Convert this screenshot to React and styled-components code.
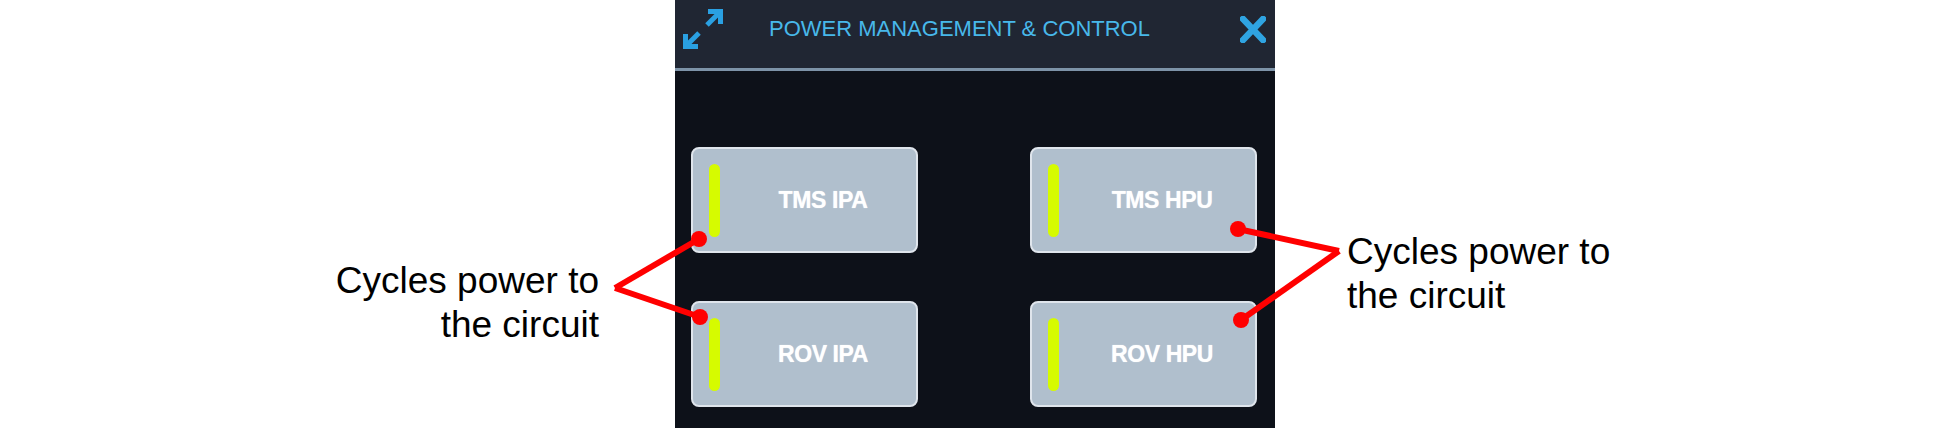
import styled, { createGlobalStyle } from "styled-components";

const GlobalStyle = createGlobalStyle`
  html, body {
    margin: 0;
    padding: 0;
    background: #fff;
    font-family: "Liberation Sans", Arial, sans-serif;
  }
`;

const Page = styled.div`
  position: relative;
  display: flex;
  width: 1950px;
  height: 428px;
  background: #fff;
  overflow: hidden;
`;

const Side = styled.div`
  width: ${(p) => p.$width};
  flex: ${(p) => (p.$grow ? 1 : "none")};
  display: flex;
  flex-direction: column;
  align-items: ${(p) => (p.$align === "right" ? "flex-end" : "flex-start")};
  padding: ${(p) => p.$pad};
  box-sizing: border-box;
`;

const Note = styled.div`
  font-family: "Liberation Sans", Arial, sans-serif;
  font-size: 37px;
  line-height: 44px;
  color: #000;
  text-align: ${(p) => p.$align};
`;

const Panel = styled.div`
  width: 600px;
  height: 428px;
  background: #0d1119;
  display: flex;
  flex-direction: column;
`;

const Header = styled.div`
  background: #202633;
  border-bottom: 3px solid #7d93a8;
  display: flex;
  align-items: center;
  padding: 0 9px 10px 7px;
  height: 58px;
`;

const Title = styled.div`
  flex: 1;
  margin-left: 45px;
  color: #48b8ea;
  font-size: 22px;
  white-space: nowrap;
`;

const Grid = styled.div`
  display: grid;
  grid-template-columns: 227px 227px;
  justify-content: space-between;
  row-gap: 48px;
  padding: 76px 18px 0 16px;
`;

const Button = styled.div`
  height: 106px;
  box-sizing: border-box;
  border: 2px solid #dfe5ec;
  border-radius: 8px;
  background: #b0bfcd;
  display: flex;
  align-items: center;
  padding-left: 16px;
`;

const Bar = styled.div`
  width: 11px;
  height: 73px;
  border-radius: 6px;
  background: ${(p) => (p.$on ? "#d6fb00" : "#6b7a88")};
`;

const Label = styled.div`
  flex: 1;
  text-align: center;
  padding-left: 10px;
  color: #fff;
  font-weight: bold;
  font-size: 23px;
  letter-spacing: -0.4px;
  text-shadow: 0 0 1px rgba(255, 255, 255, 0.8);
`;

const Leaders = styled.svg`
  position: absolute;
  left: 0;
  top: 0;
  pointer-events: none;
`;

const ExpandIcon = () => (
  <svg width="42" height="42" viewBox="0 0 42 42" fill="none">
    <g stroke="#2aa0e2" strokeWidth="5" strokeLinejoin="miter">
      <path d="M26 3.5 H38.5 V16" />
      <path d="M38.5 3.5 L25 17" />
      <path d="M3.5 26 V38.5 H16" />
      <path d="M3.5 38.5 L17 25" />
    </g>
  </svg>
);

const CloseIcon = () => (
  <svg width="26" height="27" viewBox="0 0 26 27">
    <path
      d="M3 3 L23 24 M23 3 L3 24"
      stroke="#2fa4e2"
      strokeWidth="6.5"
      strokeLinecap="square"
    />
  </svg>
);

const buttons = [
  { id: "tms-ipa", label: "TMS IPA" },
  { id: "tms-hpu", label: "TMS HPU" },
  { id: "rov-ipa", label: "ROV IPA" },
  { id: "rov-hpu", label: "ROV HPU" },
];

const leaders = [
  { from: [615, 288], to: [[699, 239], [700, 317]] },
  { from: [1339, 251], to: [[1238, 229], [1241, 320]] },
];

const App = () => {
  return (
    <>
      <GlobalStyle />
      <Page>
        <Side $width="675px" $align="right" $pad="259px 76px 0 0">
          <Note $align="right">
            Cycles power to
            <br />
            the circuit
          </Note>
        </Side>
        <Panel>
          <Header>
            <ExpandIcon />
            <Title>POWER MANAGEMENT &amp; CONTROL</Title>
            <CloseIcon />
          </Header>
          <Grid>
            {buttons.map((b) => (
              <Button key={b.id}>
                <Bar $on />
                <Label>{b.label}</Label>
              </Button>
            ))}
          </Grid>
        </Panel>
        <Side $grow $align="left" $pad="230px 0 0 72px">
          <Note $align="left">
            Cycles power to
            <br />
            the circuit
          </Note>
        </Side>
        <Leaders width="1950" height="428">
          {leaders.map((l, i) => (
            <g key={i} stroke="#ff0000" strokeWidth="6" fill="#ff0000">
              {l.to.map(([x, y], j) => (
                <g key={j}>
                  <line x1={l.from[0]} y1={l.from[1]} x2={x} y2={y} />
                  <circle cx={x} cy={y} r="8" stroke="none" />
                </g>
              ))}
            </g>
          ))}
        </Leaders>
      </Page>
    </>
  );
};

export default App;
